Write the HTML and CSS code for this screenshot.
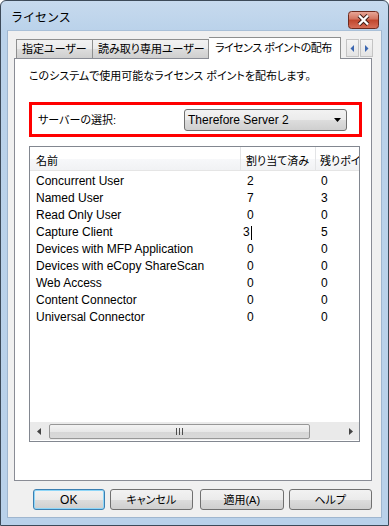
FILE: index.html
```html
<!DOCTYPE html>
<html lang="ja">
<head>
<meta charset="utf-8">
<link rel="stylesheet" href="styles.css">
</head>
<body>
<div class="window">
  <div class="titlebar">
    <span class="title">ライセンス</span>
    <span class="close">
      <svg width="31" height="18" viewBox="0 0 31 18">
        <defs>
          <linearGradient id="cg" x1="0" y1="0" x2="0" y2="1">
            <stop offset="0" stop-color="#e9a99a"/>
            <stop offset="0.45" stop-color="#d2735f"/>
            <stop offset="0.5" stop-color="#c0452c"/>
            <stop offset="1" stop-color="#d8705a"/>
          </linearGradient>
        </defs>
        <rect x="0.5" y="0.5" width="30" height="17" rx="3" fill="url(#cg)" stroke="#6d2a1e"/>
        <path d="M11 4.5 L20 13.5 M20 4.5 L11 13.5" stroke="#3b1a14" stroke-width="4.2" fill="none"/>
        <path d="M11 4.5 L20 13.5 M20 4.5 L11 13.5" stroke="#ffffff" stroke-width="2.4" fill="none"/>
      </svg>
    </span>
  </div>
  <div class="client">
    <div class="tabs">
      <span class="tab t1">指定ユーザー</span>
      <span class="tab t2">読み取り専用ユーザー</span>
      <span class="tab active">ライセンス ポイントの配布</span>
      <span class="tabscroll">
        <span class="tsbtn"><svg width="5" height="7" viewBox="0 0 5 7"><path d="M4 0 L0.5 3.5 L4 7 Z" fill="#3b66b0"/></svg></span>
        <span class="tsbtn"><svg width="5" height="7" viewBox="0 0 5 7"><path d="M1 0 L4.5 3.5 L1 7 Z" fill="#3b66b0"/></svg></span>
      </span>
    </div>
    <div class="panel">
      <p class="intro ja">このシステムで使用可能なライセンス ポイントを配布します。</p>
      <div class="highlight">
        <span class="label ja">サーバーの選択:</span>
        <span class="combo">
          <span class="combo-text">Therefore Server 2</span>
          <svg class="combo-arrow" width="7" height="4" viewBox="0 0 7 4"><path d="M0 0 H7 L3.5 4 Z" fill="#000"/></svg>
        </span>
      </div>
      <div class="list">
        <div class="header ja">
          <span class="c1">名前</span>
          <span class="c2">割り当て済み</span>
          <span class="c3">残りポイント</span>
        </div>
        <div class="rows">
          <div class="row"><span class="c1">Concurrent User</span><span class="c2">2</span><span class="c3">0</span></div>
          <div class="row"><span class="c1">Named User</span><span class="c2">7</span><span class="c3">3</span></div>
          <div class="row"><span class="c1">Read Only User</span><span class="c2">0</span><span class="c3">0</span></div>
          <div class="row"><span class="c1">Capture Client</span><span class="c2 edit">3<span class="caret"></span></span><span class="c3">5</span></div>
          <div class="row"><span class="c1">Devices with MFP Application</span><span class="c2">0</span><span class="c3">0</span></div>
          <div class="row"><span class="c1">Devices with eCopy ShareScan</span><span class="c2">0</span><span class="c3">0</span></div>
          <div class="row"><span class="c1">Web Access</span><span class="c2">0</span><span class="c3">0</span></div>
          <div class="row"><span class="c1">Content Connector</span><span class="c2">0</span><span class="c3">0</span></div>
          <div class="row"><span class="c1">Universal Connector</span><span class="c2">0</span><span class="c3">0</span></div>
        </div>
        <div class="hscroll">
          <span class="sarrow"><svg width="4" height="7" viewBox="0 0 4 7"><path d="M4 0 L0 3.5 L4 7 Z" fill="#444"/></svg></span>
          <span class="thumb"><span class="grip"></span><span class="grip"></span><span class="grip"></span></span>
          <span class="strack"></span>
          <span class="sarrow"><svg width="4" height="7" viewBox="0 0 4 7"><path d="M0 0 L4 3.5 L0 7 Z" fill="#444"/></svg></span>
        </div>
      </div>
    </div>
    <div class="buttons ja">
      <span class="btn ok">OK</span>
      <span class="btn b2">キャンセル</span>
      <span class="btn b2">適用(A)</span>
      <span class="btn b2">ヘルプ</span>
    </div>
  </div>
</div>
</body>
</html>
```
FILE: styles.css
```css
* { box-sizing: border-box; }
html, body { margin: 0; padding: 0; background: #ffffff; }
body {
  font-family: "Liberation Sans", "Noto Sans CJK JP", sans-serif;
  font-size: 12px;
  color: #000;
  font-feature-settings: "palt";
}
.ja { font-size: 11px; }
.window {
  width: 389px;
  height: 526px;
  border: 1px solid #3d4a59;
  border-radius: 6px 6px 0 0;
  background: linear-gradient(#c7daee 0px, #bad2ea 30px, #b9d1ea 100%);
  padding: 0 6px 7px 6px;
  display: flex;
  flex-direction: column;
}
.titlebar {
  height: 29px;
  display: flex;
  align-items: flex-start;
  padding-left: 4px;
}
.title {
  font-family: "Noto Sans CJK JP", sans-serif;
  font-feature-settings: normal;
  font-size: 12px;
  margin-top: 7px;
}
.close {
  margin-left: auto;
  margin-top: 10px;
  margin-right: 3px;
  height: 18px;
  display: flex;
}
.client {
  flex: 1;
  background: #f0f0f0;
  border: 1px solid #9fb6cf;
  border-top-color: #a9c0d8;
  padding: 6px 9px 0 6px;
  display: flex;
  flex-direction: column;
}
.tabs {
  display: flex;
  align-items: flex-end;
  height: 21px;
  padding-left: 2px;
  position: relative;
  z-index: 1;
  font-size: 11px;
}
.tab {
  height: 19px;
  border: 1px solid #8e8f8f;
  border-bottom: none;
  background: linear-gradient(#f2f2f2, #ebebeb 50%, #dddddd 51%, #cfcfcf);
  padding: 0 0 0 5px;
  line-height: 18px;
  white-space: nowrap;
  flex: none;
  overflow: hidden;
}
.t1 { width: 76px; border-right: none; }
.t2 { width: 117px; }
.tab.active {
  width: 132px;
  height: 22px;
  background: #ffffff;
  border: 1px solid #8e8f8f;
  border-left: none;
  border-bottom: none;
  margin-bottom: -1px;
  padding-left: 6px;
  line-height: 20px;
  letter-spacing: -0.5px;
}
.tabscroll {
  display: flex;
  gap: 1px;
  margin-left: 5px;
  margin-bottom: 1px;
}
.tsbtn {
  width: 13px;
  height: 18px;
  border: 1px solid #c4c4c4;
  background: linear-gradient(#f4f4f4, #e4e4e4);
  display: flex;
  align-items: center;
  justify-content: center;
}
.panel {
  height: 423px;
  background: #ffffff;
  border: 1px solid #898c95;
  padding: 9px 9px 0 14px;
  display: flex;
  flex-direction: column;
}
.intro {
  margin: 0;
  line-height: 17px;
}
.highlight {
  margin-top: 17px;
  height: 35px;
  border: 3px solid #ff0000;
  display: flex;
  align-items: center;
  padding: 0 12px 0 6px;
}
.label { line-height: 16px; }
.combo {
  margin-left: auto;
  width: 163px;
  height: 22px;
  border: 1px solid #707070;
  border-radius: 3px;
  background: linear-gradient(#f2f2f2, #ebebeb 50%, #dddddd 51%, #cfcfcf);
  display: flex;
  align-items: center;
  padding: 0 4px 0 3px;
}
.combo-text { line-height: 16px; }
.combo-arrow { margin-left: auto; margin-right: 1px; }
.list {
  margin-top: 9px;
  margin-right: 2px;
  height: 296px;
  border: 1px solid #828790;
  display: flex;
  flex-direction: column;
  overflow: hidden;
}
.header, .row {
  display: flex;
  white-space: nowrap;
}
.header {
  height: 24px;
  background: linear-gradient(#ffffff, #ffffff 50%, #f7f8fa 51%, #f1f2f4);
  border-bottom: 1px solid #e5e5e5;
}
.header .c1, .header .c2 { border-right: 1px solid #e3e4e6; }
.header span { height: 23px; display: flex; align-items: center; padding-top: 3px; }
.c1 { width: 211px; padding-left: 6px; flex: none; }
.c2 { width: 75px; padding-left: 5px; flex: none; }
.c3 { width: 80px; padding-left: 4px; flex: none; overflow: hidden; }
.rows {
  flex: 1;
  padding-top: 2px;
}
.row {
  height: 17px;
  line-height: 17px;
}
.row .c2 { padding-left: 6px; }
.row .c3 { padding-left: 5px; }
.edit { display: flex; align-items: center; padding-left: 2px !important; }
.caret {
  width: 1px;
  height: 14px;
  background: #000;
  margin-left: 1px;
}
.hscroll {
  height: 18px;
  margin-bottom: 1px;
  background: #eaeaea;
  display: flex;
  align-items: center;
}
.sarrow {
  width: 17px;
  height: 17px;
  display: flex;
  align-items: center;
  justify-content: center;
}
.thumb {
  margin-left: 2px;
  width: 261px;
  height: 15px;
  border: 1px solid #979797;
  border-radius: 2px;
  background: linear-gradient(to bottom, #f3f3f3, #e8e8e8 50%, #d6d6d6 51%, #d9d9d9);
  display: flex;
  justify-content: center;
  align-items: center;
  gap: 2px;
}
.grip {
  width: 1px;
  height: 7px;
  background: #4d4d4d;
}
.strack { flex: 1; }
.buttons {
  display: flex;
  margin-top: 8px;
  padding-left: 19px;
}
.btn {
  height: 21px;
  border: 1px solid #707070;
  border-radius: 3px;
  background: linear-gradient(#f2f2f2, #ebebeb 50%, #dddddd 51%, #cfcfcf);
  display: flex;
  align-items: center;
  justify-content: center;
  line-height: 16px;
}
.btn.ok {
  width: 72px;
  font-size: 12px;
  border: 1px solid #3c7fb1;
  box-shadow: inset 0 0 0 1px #8ed6f8;
}
.btn.b2 { width: 84px; margin-left: 5px; }
.btn.b2:nth-child(3) { margin-left: 7px; }
```
